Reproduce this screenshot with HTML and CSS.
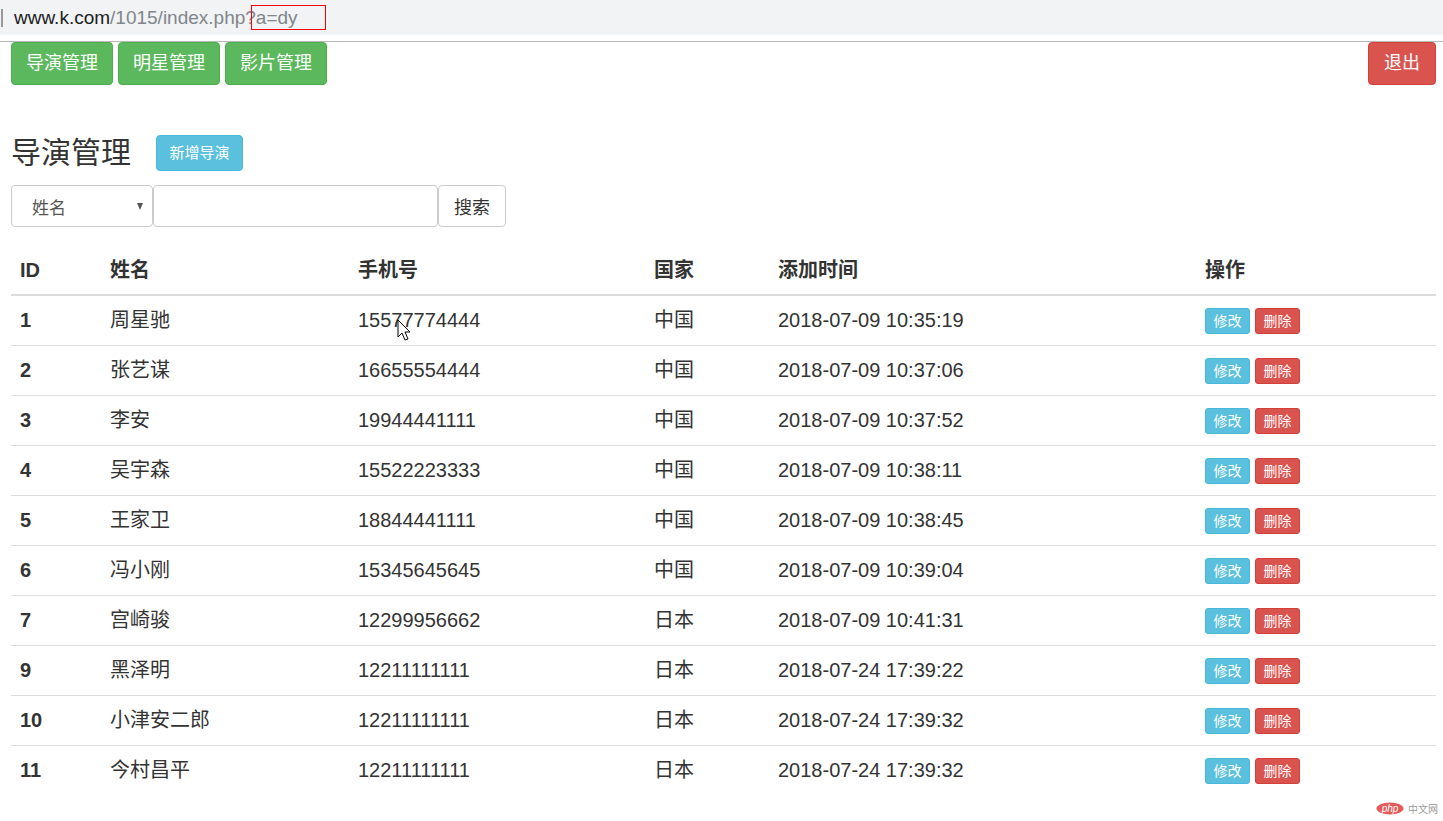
FILE: index.html
```html
<!DOCTYPE html>
<html lang="zh-CN">
<head>
<meta charset="utf-8">
<title>导演管理</title>
<link rel="stylesheet" href="styles.css">
</head>
<body>
<div class="browser">
  <div class="addr">
    <span class="caret"></span>
    <span class="host">www.k.com</span><span class="path">/1015/index.php?a=dy</span>
    <span class="mark"></span>
  </div>
</div>
<div class="page">
  <div class="nav">
    <div class="nav-left">
      <a class="btn btn-success btn-lg">导演管理</a>
      <a class="btn btn-success btn-lg">明星管理</a>
      <a class="btn btn-success btn-lg">影片管理</a>
    </div>
    <a class="btn btn-danger btn-lg btn-exit">退出</a>
  </div>

  <div class="title-row">
    <h1 class="title">导演管理</h1>
    <a class="btn btn-info btn-add">新增导演</a>
  </div>

  <form class="search">
    <div class="select"><span>姓名</span><span class="tri"></span></div>
    <div class="input"></div>
    <div class="btn-search">搜索</div>
  </form>

  <table class="table">
    <colgroup>
      <col class="c1"><col class="c2"><col class="c3"><col class="c4"><col class="c5"><col class="c6">
    </colgroup>
    <thead>
      <tr><th>ID</th><th>姓名</th><th>手机号</th><th>国家</th><th>添加时间</th><th>操作</th></tr>
    </thead>
    <tbody>
      <tr><td class="id">1</td><td>周星驰</td><td class="phone">15577774444<svg class="cursor" width="16" height="24" viewBox="0 0 16 24"><path d="M1 1 L1 18 L5 14 L8 21 L11 20 L8 13 L13 13 Z" fill="#fff" stroke="#000" stroke-width="1"/></svg></td><td>中国</td><td>2018-07-09 10:35:19</td><td><a class="sm info">修改</a><a class="sm danger">删除</a></td></tr>
      <tr><td class="id">2</td><td>张艺谋</td><td>16655554444</td><td>中国</td><td>2018-07-09 10:37:06</td><td><a class="sm info">修改</a><a class="sm danger">删除</a></td></tr>
      <tr><td class="id">3</td><td>李安</td><td>19944441111</td><td>中国</td><td>2018-07-09 10:37:52</td><td><a class="sm info">修改</a><a class="sm danger">删除</a></td></tr>
      <tr><td class="id">4</td><td>吴宇森</td><td>15522223333</td><td>中国</td><td>2018-07-09 10:38:11</td><td><a class="sm info">修改</a><a class="sm danger">删除</a></td></tr>
      <tr><td class="id">5</td><td>王家卫</td><td>18844441111</td><td>中国</td><td>2018-07-09 10:38:45</td><td><a class="sm info">修改</a><a class="sm danger">删除</a></td></tr>
      <tr><td class="id">6</td><td>冯小刚</td><td>15345645645</td><td>中国</td><td>2018-07-09 10:39:04</td><td><a class="sm info">修改</a><a class="sm danger">删除</a></td></tr>
      <tr><td class="id">7</td><td>宫崎骏</td><td>12299956662</td><td>日本</td><td>2018-07-09 10:41:31</td><td><a class="sm info">修改</a><a class="sm danger">删除</a></td></tr>
      <tr><td class="id">9</td><td>黑泽明</td><td>12211111111</td><td>日本</td><td>2018-07-24 17:39:22</td><td><a class="sm info">修改</a><a class="sm danger">删除</a></td></tr>
      <tr><td class="id">10</td><td>小津安二郎</td><td>12211111111</td><td>日本</td><td>2018-07-24 17:39:32</td><td><a class="sm info">修改</a><a class="sm danger">删除</a></td></tr>
      <tr><td class="id">11</td><td>今村昌平</td><td>12211111111</td><td>日本</td><td>2018-07-24 17:39:32</td><td><a class="sm info">修改</a><a class="sm danger">删除</a></td></tr>
    </tbody>
  </table>
</div>
<div class="watermark">
  <svg width="28" height="13" viewBox="0 0 28 13"><ellipse cx="14" cy="6.5" rx="13.5" ry="6" fill="#e35b5b"/><text x="14" y="9.6" text-anchor="middle" font-family="Liberation Sans, sans-serif" font-style="italic" font-size="10" fill="#fff">php</text></svg>
  <span>中文网</span>
</div>
</body>
</html>
```
FILE: styles.css
```css
* { box-sizing: border-box; }
html, body { margin: 0; padding: 0; background: #fff; }
body {
  font-family: "Liberation Sans", "Noto Sans CJK SC", sans-serif;
  color: #333;
  width: 1443px;
  height: 821px;
  overflow: hidden;
  position: relative;
}
.browser {
  padding-bottom: 6px;
  border-bottom: 1px solid #b9b9b9;
}
.addr {
  position: relative;
  height: 35px;
  background: #f1f3f4;
  display: flex;
  align-items: center;
  padding-left: 14px;
  font-family: "Liberation Sans", sans-serif;
  font-size: 19px;
  line-height: 24px;
}
.caret {
  position: absolute;
  left: 1px;
  top: 9px;
  width: 2px;
  height: 18px;
  background: #999;
}
.host { color: #202124; }
.path { color: #80868b; }
.mark {
  position: absolute;
  left: 251px;
  top: 5px;
  width: 75px;
  height: 25px;
  border: 1px solid #ff0000;
}
.page { padding: 0 7px 0 11px; }
.nav {
  display: flex;
  justify-content: space-between;
  align-items: flex-start;
}
.nav-left { display: flex; gap: 5px; }
.btn {
  display: inline-block;
  border: 1px solid transparent;
  border-radius: 4px;
  color: #fff;
  text-decoration: none;
  white-space: nowrap;
}
.btn-lg {
  font-size: 18px;
  line-height: 25px;
  padding: 8px 14px;
}
.btn-exit { padding: 8px 15px; }
.btn-success { background: #5cb85c; border-color: #4cae4c; }
.btn-danger { background: #d9534f; border-color: #d43f3a; }
.btn-info { background: #5bc0de; border-color: #46b8da; }
.title-row {
  display: flex;
  align-items: center;
  margin-top: 50px;
  height: 36px;
}
.title {
  margin: 0 25px 0 0;
  font-size: 30px;
  font-weight: normal;
  line-height: 36px;
}
.btn-add {
  width: 87px;
  text-align: center;
  font-size: 15px;
  line-height: 24px;
  padding: 5px 0;
}
.search {
  display: flex;
  margin: 14px 0 0 0;
  height: 42px;
}
.select, .input, .btn-search {
  border: 1px solid #ccc;
  border-radius: 4px;
  height: 42px;
  background: #fff;
}
.select {
  width: 142px;
  display: flex;
  align-items: center;
  justify-content: space-between;
  padding: 0 9px 0 20px;
  font-size: 17px;
  color: #555;
}
.tri {
  width: 0;
  height: 0;
  border-left: 3.5px solid transparent;
  border-right: 3.5px solid transparent;
  border-top: 7px solid #555;
}
.input { width: 285px; }
.btn-search {
  width: 68px;
  font-size: 18px;
  display: flex;
  align-items: center;
  justify-content: center;
  color: #333;
}
.table {
  margin-top: 18px;
  width: 1425px;
  border-collapse: collapse;
  table-layout: fixed;
  font-size: 20px;
  line-height: 26px;
}
.c1 { width: 90px; }
.c2 { width: 248px; }
.c3 { width: 296px; }
.c4 { width: 124px; }
.c5 { width: 427px; }
.c6 { width: 240px; }
.table th {
  text-align: left;
  font-weight: bold;
  height: 50px;
  padding: 0 9px;
  border-bottom: 2px solid #ddd;
  vertical-align: middle;
}
.table td {
  height: 50px;
  padding: 0 9px;
  vertical-align: middle;
  border-bottom: 1px solid #ddd;
  white-space: nowrap;
}
.table tbody tr:last-child td { border-bottom: 0; }
.table td.id { font-weight: bold; }
.phone { position: relative; }
.cursor {
  position: absolute;
  left: 48px;
  top: 23px;
}
.sm {
  display: inline-block;
  width: 45px;
  text-align: center;
  font-size: 14px;
  line-height: 20px;
  padding: 2px 0;
  border: 1px solid transparent;
  border-radius: 3px;
  color: #fff;
  margin-right: 5px;
  vertical-align: middle;
}
.sm.info { background: #5bc0de; border-color: #46b8da; }
.sm.danger { background: #d9534f; border-color: #d43f3a; }
.watermark {
  position: absolute;
  left: 1376px;
  top: 801px;
  display: flex;
  align-items: center;
  gap: 4px;
  font-size: 10px;
  color: #999;
}
```
